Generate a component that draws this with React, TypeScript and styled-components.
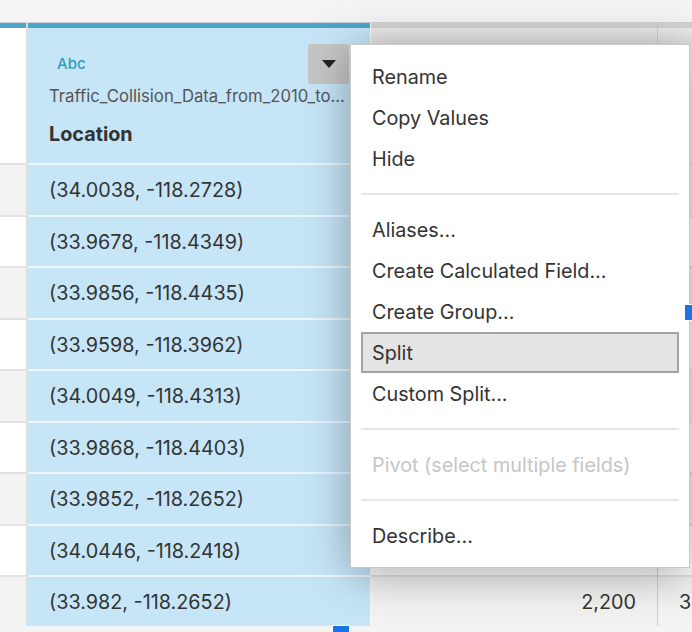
import React from 'react';
import styled, { createGlobalStyle } from 'styled-components';

const GlobalStyle = createGlobalStyle`
  body {
    margin: 0;
    background: #f4f4f4;
    font-family: Inter, "Noto Sans", sans-serif;
    color: #333;
  }
`;

const Page = styled.div`
  position: relative;
  width: 692px;
  height: 632px;
  overflow: hidden;
  background: #f4f4f4;
  display: flex;
  flex-direction: column;
`;

const TopStrip = styled.div`
  height: 22px;
  flex: none;
  border-bottom: 1px solid #d0d0d0;
`;

const Table = styled.div`
  display: flex;
  height: 603px;
  flex: none;
`;

const Column = styled.div<{ $width?: number; $divider?: string }>`
  display: flex;
  flex-direction: column;
  flex: ${p => (p.$width ? `0 0 ${p.$width}px` : '1 1 auto')};
  border-right: ${p => p.$divider || 'none'};
  overflow: hidden;
`;

const Header = styled.div<{ $accent: string; $bg: string }>`
  position: relative;
  height: 135px;
  flex: none;
  border-top: 5px solid ${p => p.$accent};
  background: ${p => p.$bg};
  padding-left: 21px;
`;

const TypeTag = styled.div`
  margin-top: 26px;
  padding-left: 8px;
  height: 20px;
  line-height: 20px;
  font-size: 15px;
  font-weight: 500;
  color: #2f9cc0;
`;

const Source = styled.div`
  margin-top: 12px;
  height: 20px;
  line-height: 20px;
  font-size: 16.7px;
  color: #555;
  white-space: nowrap;
`;

const FieldName = styled.div`
  margin-top: 16px;
  height: 24px;
  line-height: 24px;
  font-size: 19.8px;
  font-weight: 700;
  color: #333;
`;

const DropButton = styled.div`
  position: absolute;
  top: 16px;
  right: 21px;
  width: 41px;
  height: 40px;
  border-radius: 3px;
  background: #c6c6c6;
  display: flex;
  align-items: center;
  justify-content: center;
`;

const Cell = styled.div<{ $h: number; $bg: string; $line: string; $align?: string }>`
  height: ${p => p.$h}px;
  flex: none;
  box-sizing: border-box;
  border-top: 2px solid ${p => p.$line};
  background: ${p => p.$bg};
  display: flex;
  align-items: center;
  justify-content: ${p => p.$align || 'flex-start'};
  padding: 0 21px;
  font-size: 19.8px;
  color: #333;
  white-space: nowrap;
`;

const Menu = styled.div`
  position: absolute;
  left: 350px;
  top: 44px;
  width: 340px;
  box-sizing: border-box;
  padding: 11px 0;
  background: #fff;
  border: 1px solid #c9c9c9;
  box-shadow: 0 6px 44px rgba(0, 0, 0, 0.34);
`;

const MenuItem = styled.div<{ $active?: boolean; $disabled?: boolean }>`
  height: 41px;
  box-sizing: border-box;
  margin: 0 10px;
  padding: 0 10px 0 9px;
  display: flex;
  align-items: center;
  font-size: 19.8px;
  white-space: nowrap;
  color: ${p => (p.$disabled ? '#c6c6c6' : '#333')};
  background: ${p => (p.$active ? '#e4e4e4' : 'transparent')};
  border: 2px solid ${p => (p.$active ? '#a3a3a3' : 'transparent')};
`;

const Separator = styled.div`
  height: 30px;
  display: flex;
  align-items: center;
  padding: 0 10px;

  &::after {
    content: '';
    flex: 1;
    height: 2px;
    background: #e6e6e6;
  }
`;

const Handle = styled.div<{ $w: number; $h: number }>`
  position: absolute;
  width: ${p => p.$w}px;
  height: ${p => p.$h}px;
  background: #1a73e8;
  border: 1px solid #fff;
`;

const locations = [
  '(34.0038, -118.2728)',
  '(33.9678, -118.4349)',
  '(33.9856, -118.4435)',
  '(33.9598, -118.3962)',
  '(34.0049, -118.4313)',
  '(33.9868, -118.4403)',
  '(33.9852, -118.2652)',
  '(34.0446, -118.2418)',
  '(33.982, -118.2652)',
];

const heights = [52, 51, 52, 51, 52, 51, 52, 51, 52];

type Entry = { label: string; active?: boolean; disabled?: boolean } | 'sep';

const menu: Entry[] = [
  { label: 'Rename' },
  { label: 'Copy Values' },
  { label: 'Hide' },
  'sep',
  { label: 'Aliases...' },
  { label: 'Create Calculated Field...' },
  { label: 'Create Group...' },
  { label: 'Split', active: true },
  { label: 'Custom Split...' },
  'sep',
  { label: 'Pivot (select multiple fields)', disabled: true },
  'sep',
  { label: 'Describe...' },
];

const stripe = (i: number) => (i % 2 === 0 ? '#f3f3f3' : '#fff');
const greyHeader = 'linear-gradient(#ececec, #e2e2e2 16px, #f4f4f4 40px)';

const App: React.FC = () => {
  return (
    <Page>
      <GlobalStyle />
      <TopStrip />
      <Table>
        <Column $width={26} $divider="2px solid #dedede">
          <Header $accent="#4ba5c9" $bg="#fff" />
          {heights.map((h, i) => (
            <Cell key={i} $h={h} $bg={stripe(i)} $line="#e2e2e2" />
          ))}
        </Column>
        <Column $width={342} $divider="1px solid #f4fafd">
          <Header $accent="#4ba5c9" $bg="#c6e6f8">
            <TypeTag>Abc</TypeTag>
            <Source>Traffic_Collision_Data_from_2010_to...</Source>
            <FieldName>Location</FieldName>
            <DropButton>
              <svg width="14" height="8" viewBox="0 0 14 8">
                <path d="M0 0 H14 L7 8 Z" fill="#222" />
              </svg>
            </DropButton>
          </Header>
          {locations.map((loc, i) => (
            <Cell key={i} $h={heights[i]} $bg="#c6e6f8" $line="#eef7fc">
              {loc}
            </Cell>
          ))}
        </Column>
        <Column $width={286} $divider="1px solid #cfcfcf">
          <Header $accent="#d3d3d3" $bg={greyHeader} />
          {heights.map((h, i) => (
            <Cell key={i} $h={h} $bg={stripe(i)} $line="#e2e2e2" $align="flex-end">
              {i === 8 ? '2,200' : ''}
            </Cell>
          ))}
        </Column>
        <Column>
          <Header $accent="#d3d3d3" $bg={greyHeader} />
          {heights.map((h, i) => (
            <Cell key={i} $h={h} $bg={stripe(i)} $line="#e2e2e2">
              {i === 8 ? '3' : ''}
            </Cell>
          ))}
        </Column>
      </Table>

      <Menu>
        {menu.map((m, i) =>
          m === 'sep' ? (
            <Separator key={i} />
          ) : (
            <MenuItem key={i} $active={m.active} $disabled={m.disabled}>
              {m.label}
            </MenuItem>
          )
        )}
      </Menu>

      <Handle $w={16} $h={8} style={{ left: 332, top: 625 }} />
      <Handle $w={8} $h={15} style={{ left: 684, top: 304 }} />
    </Page>
  );
};

export default App;
